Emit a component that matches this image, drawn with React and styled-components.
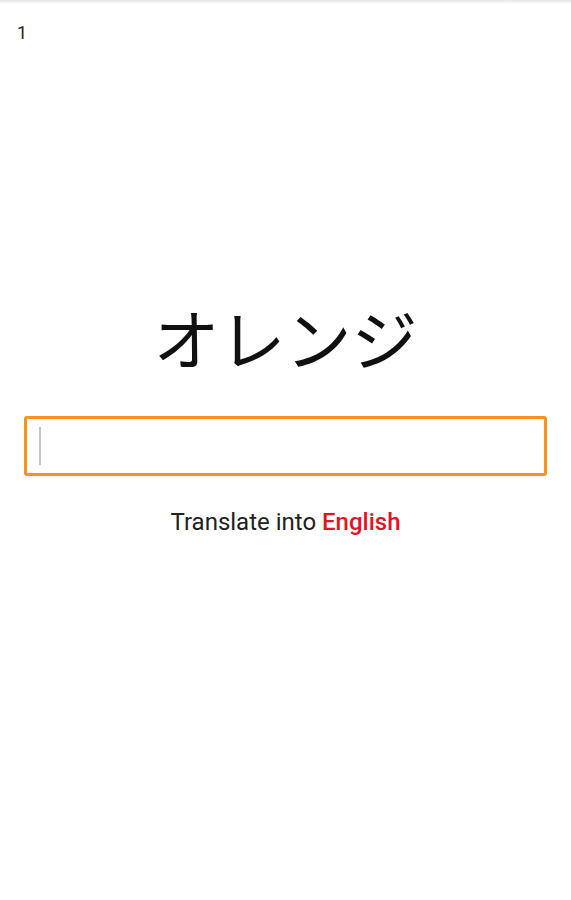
import React from "react";
import styled, { createGlobalStyle } from "styled-components";

const Global = createGlobalStyle`
  html, body { margin: 0; padding: 0; background: #ffffff; }
  body { font-family: Roboto, "Noto Sans", sans-serif; }
`;

const Page = styled.div`
  min-height: 900px;
  display: flex;
  flex-direction: column;
  background: #fff;
`;

const TopShade = styled.div`
  height: 4px;
  background: linear-gradient(#e6e6e6, #ffffff);
`;

const Counter = styled.div`
  padding: 18px 0 0 17px;
  font-family: Roboto, sans-serif;
  font-size: 18px;
  line-height: 22px;
  color: #222;
`;

const Main = styled.main`
  display: flex;
  flex-direction: column;
  align-items: center;
  padding: 0 24px;
  margin-top: 252px;
`;

const Word = styled.h1`
  margin: 0;
  font-family: "Noto Sans CJK JP", sans-serif;
  font-weight: 400;
  font-size: 66px;
  line-height: 80px;
  color: #111;
`;

const Field = styled.div`
  margin-top: 40px;
  align-self: stretch;
  height: 60px;
  box-sizing: border-box;
  border: 3px solid #f7931e;
  border-radius: 3px;
  display: flex;
  align-items: center;
  padding-left: 12px;
`;

const Caret = styled.span`
  width: 2px;
  height: 38px;
  background: #c4c4c4;
`;

const Hint = styled.p`
  margin: 32px 0 0;
  font-family: Roboto, sans-serif;
  font-size: 24px;
  line-height: 28px;
  color: #222;
`;

const Lang = styled.span`
  color: #e3141f;
  font-weight: 500;
`;

export default function App() {
  return (
    <>
      <Global />
      <Page>
        <TopShade />
        <Counter>1</Counter>
        <Main>
          <Word>オレンジ</Word>
          <Field>
            <Caret />
          </Field>
          <Hint>
            Translate into <Lang>English</Lang>
          </Hint>
        </Main>
      </Page>
    </>
  );
}
